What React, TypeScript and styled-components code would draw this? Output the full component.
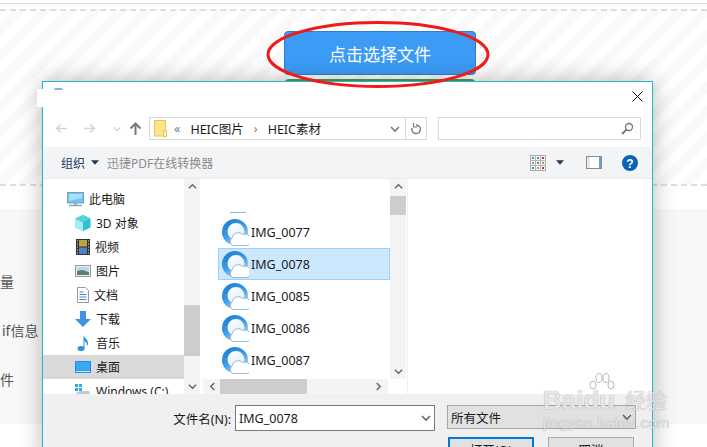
import React from 'react';
import styled, { createGlobalStyle } from 'styled-components';

const GlobalStyle = createGlobalStyle`
  html, body {
    margin: 0;
    padding: 0;
    background: #fff;
  }
`;

const uiFont = `"Noto Sans", "Noto Sans CJK SC", sans-serif`;

const Page = styled.div`
  position: relative;
  width: 707px;
  height: 447px;
  overflow: hidden;
  background: #fff;
  font-family: ${uiFont};
`;

const TopRule = styled.div`
  height: 3px;
  border-bottom: 1px solid #dcdcdc;
  margin-bottom: 5px;
`;

const UploadZone = styled.div`
  height: 177px;
  box-sizing: border-box;
  border-top: 2px dashed #dedede;
  border-bottom: 2px dashed #dedede;
  padding: 20px 0 0 53px;
  display: flex;
  flex-direction: column;
  align-items: center;
  gap: 4px;
  background: repeating-linear-gradient(135deg, #fff 0 9px, #f9f9f9 9px 18px);
`;

const PickButton = styled.div`
  width: 192px;
  height: 44px;
  box-sizing: border-box;
  border: 1px solid #2f7fd0;
  border-radius: 4px;
  background: #3b9bf5;
  color: #fff;
  font-size: 17px;
  display: flex;
  align-items: center;
  justify-content: center;
  flex: none;
`;

const GreenButton = styled.div`
  width: 190px;
  height: 44px;
  border-radius: 4px;
  background: #4a9e57;
  flex: none;
`;

const InfoPanel = styled.div`
  margin-top: 23px;
  height: 215px;
  background: #f8f8f8;
  display: flex;
  flex-direction: column;
  padding-top: 63px;
  box-sizing: border-box;
  gap: 30px;
`;

const InfoLine = styled.div<{ $nudge?: number }>`
  font-size: 14px;
  line-height: 19px;
  color: #555;
  padding-left: ${(p) => p.$nudge ?? 0}px;
`;

const Dialog = styled.div`
  position: absolute;
  left: 42px;
  top: 81px;
  width: 611px;
  height: 380px;
  box-sizing: border-box;
  border: 1px solid #1fb9c9;
  background: #fff;
  box-shadow: 0 0 22px rgba(0, 0, 0, 0.28);
  display: flex;
  flex-direction: column;
`;

const TitleBar = styled.div`
  height: 29px;
  padding: 0 9px 6px 0;
  display: flex;
  align-items: center;
  justify-content: flex-end;
  flex: none;
`;

const NavRow = styled.div`
  height: 23px;
  display: flex;
  align-items: center;
  padding: 0 11px 0 12px;
  flex: none;
`;

const NavArrow = styled.div<{ $w: number }>`
  width: ${(p) => p.$w}px;
  display: flex;
  align-items: center;
  justify-content: center;
  flex: none;
`;

const AddressBox = styled.div`
  width: 272px;
  height: 21px;
  border: 1px solid #d9d9d9;
  display: flex;
  align-items: center;
  font-size: 12.5px;
  color: #1a1a1a;
  flex: none;
  padding-left: 4px;
`;

const Crumb = styled.span<{ $gap: number; $sep?: boolean }>`
  margin-left: ${(p) => p.$gap}px;
  color: ${(p) => (p.$sep ? '#777' : 'inherit')};
`;

const AddressEnd = styled.div`
  margin-left: auto;
  height: 21px;
  display: flex;
  align-items: center;
`;

const RefreshCell = styled.div`
  width: 20px;
  height: 21px;
  border-left: 1px solid #d9d9d9;
  display: flex;
  align-items: center;
  justify-content: center;
  margin-left: 5px;
`;

const SearchBox = styled.div`
  width: 203px;
  height: 23px;
  box-sizing: border-box;
  margin-left: auto;
  border: 1px solid #d9d9d9;
  display: flex;
  align-items: center;
  justify-content: flex-end;
  padding-right: 6px;
`;

const Toolbar = styled.div`
  height: 31px;
  margin-top: 7px;
  background: #f3f4f6;
  border-bottom: 1px solid #e8e9ec;
  display: flex;
  align-items: center;
  padding: 0 14px 0 18px;
  font-size: 12px;
  flex: none;
`;

const ToolLabel = styled.span<{ $muted?: boolean }>`
  color: ${(p) => (p.$muted ? '#8b8b8b' : '#1f3a5c')};
  margin-left: ${(p) => (p.$muted ? 8 : 0)}px;
`;

const ToolRight = styled.div`
  margin-left: auto;
  display: flex;
  align-items: center;
  gap: 20px;
`;

const Panes = styled.div`
  height: 215px;
  display: flex;
  flex: none;
`;

const TreePane = styled.div`
  width: 141px;
  overflow: hidden;
  padding-top: 8px;
  box-sizing: border-box;
  flex: none;
`;

const TreeRow = styled.div<{ $active?: boolean; $indent: number }>`
  height: 24px;
  display: flex;
  align-items: center;
  gap: 5px;
  padding-left: ${(p) => p.$indent}px;
  background: ${(p) => (p.$active ? '#d9d9d9' : 'transparent')};
  font-size: 12px;
  color: #1a1a1a;
  white-space: nowrap;
`;

const VScroll = styled.div<{ $thumbTop: number; $thumbH: number }>`
  width: 16px;
  background: #f4f4f4;
  display: flex;
  flex-direction: column;
  align-items: center;
  flex: none;
  position: relative;
  justify-content: space-between;
  padding: 3px 0;
  box-sizing: border-box;

  &::after {
    content: '';
    position: absolute;
    left: 0;
    right: 0;
    top: ${(p) => p.$thumbTop}px;
    height: ${(p) => p.$thumbH}px;
    background: #cdcdcd;
  }
`;

const FileColumn = styled.div`
  width: 204px;
  margin-left: 2px;
  flex: none;
  display: flex;
  flex-direction: column;
`;

const FileArea = styled.div`
  height: 200px;
  display: flex;
  flex: none;
`;

const FileList = styled.div`
  width: 188px;
  padding-top: 37px;
  box-sizing: border-box;
  overflow: hidden;
  flex: none;
  position: relative;
`;

const CutOffIcon = styled.div`
  position: absolute;
  left: 28px;
  top: 33px;
  width: 16px;
  height: 1px;
  background: #8fb6dc;
`;

const FileRow = styled.div<{ $selected?: boolean }>`
  height: 32px;
  margin-left: 16px;
  box-sizing: border-box;
  display: flex;
  align-items: center;
  gap: 2px;
  padding-left: 3px;
  font-size: 12.5px;
  color: #1a1a1a;
  border: 1px solid ${(p) => (p.$selected ? '#99d1ff' : 'transparent')};
  background: ${(p) => (p.$selected ? '#cce8ff' : 'transparent')};
`;

const HScroll = styled.div`
  width: 185px;
  height: 15px;
  margin-left: 1px;
  background: #f4f4f4;
  display: flex;
  align-items: center;
  justify-content: space-between;
  padding: 0 5px;
  box-sizing: border-box;
  position: relative;

  &::after {
    content: '';
    position: absolute;
    left: 17px;
    top: 0;
    bottom: 0;
    width: 87px;
    background: #cdcdcd;
  }
`;

const PreviewPane = styled.div`
  flex: 1;
  border-left: 1px solid #f0f0f0;
  margin-left: 1px;
`;

const BottomPanel = styled.div`
  flex: 1;
  background: #f0f0f0;
  padding: 11px 0 0 0;
  display: grid;
  grid-template-columns: 192px 200px 199px;
  grid-auto-rows: min-content;
  font-size: 12.5px;
  color: #1a1a1a;
`;

const NameLabel = styled.div`
  height: 26px;
  display: flex;
  align-items: center;
  justify-content: flex-end;
  padding-right: 4px;
`;

const NameInput = styled.div`
  height: 24px;
  border: 1px solid #7a7a7a;
  background: #fff;
  display: flex;
  align-items: center;
  justify-content: space-between;
  padding: 0 3px;
`;

const FilterSelect = styled.div`
  height: 22px;
  width: 181px;
  margin-left: 12px;
  border: 1px solid #a6a6a6;
  background: #e1e1e1;
  display: flex;
  align-items: center;
  justify-content: space-between;
  padding: 0 3px;
`;

const ActionRow = styled.div`
  grid-column: 3;
  margin-left: 13px;
  width: 186px;
  display: flex;
  justify-content: space-between;
  margin-top: 6px;
`;

const DialogButton = styled.div<{ $primary?: boolean }>`
  width: 86px;
  height: 24px;
  box-sizing: border-box;
  border: ${(p) => (p.$primary ? '2px solid #0078d7' : '1px solid #adadad')};
  background: #e1e1e1;
  display: flex;
  align-items: center;
  justify-content: center;
`;

const RedRing = styled.svg`
  position: absolute;
  left: 262px;
  top: 16px;
  pointer-events: none;
`;

const MaskPatch = styled.div`
  position: absolute;
  left: 37px;
  top: 89px;
  width: 20px;
  height: 18px;
  background: #fff;
`;

const TitleGlint = styled.div`
  position: absolute;
  left: 54px;
  top: 88px;
  width: 9px;
  height: 2px;
  border-radius: 4px 4px 0 0;
  background: #7fb2dd;
`;

const Watermark = styled.div`
  position: absolute;
  left: 543px;
  top: 387px;
  color: rgba(255, 255, 255, 0.78);
  text-shadow: 0 0 1px rgba(110, 110, 110, 0.8);
  font-family: "Liberation Sans", "Noto Sans CJK SC", sans-serif;
  line-height: 1;
`;

const MarkTop = styled.div`
  font-size: 26px;
  font-weight: 700;
  display: flex;
  align-items: center;
  white-space: nowrap;
`;

const MarkCjk = styled.span`
  font-size: 21px;
  margin-left: 10px;
  font-weight: 400;
`;

const MarkSub = styled.div`
  font-size: 15px;
  margin-top: 2px;
  letter-spacing: 0.35px;
  white-space: nowrap;
`;

const MarkPaw = styled.svg`
  position: absolute;
  left: 46px;
  top: -15px;
`;

const Chevron = ({ dir, size = 9, color = '#666' }: { dir: 'up' | 'down' | 'left' | 'right'; size?: number; color?: string }) => {
  const d = {
    up: 'M1 7 L5 3 L9 7',
    down: 'M1 3 L5 7 L9 3',
    left: 'M7 1 L3 5 L7 9',
    right: 'M3 1 L7 5 L3 9',
  }[dir];
  return (
    <svg width={size} height={size} viewBox="0 0 10 10" style={{ position: 'relative', zIndex: 1 }}>
      <path d={d} fill="none" stroke={color} strokeWidth="1.6" />
    </svg>
  );
};

const LeftRight = ({ flip, color }: { flip?: boolean; color: string }) => (
  <svg width="13" height="11" viewBox="0 0 13 11">
    <path d={flip ? 'M1 5.5 H11 M7 1.5 L11.5 5.5 L7 9.5' : 'M12 5.5 H2 M6 1.5 L1.5 5.5 L6 9.5'} fill="none" stroke={color} strokeWidth="1.6" />
  </svg>
);

const HeicIcon = () => (
  <svg width="27" height="27" viewBox="0 0 27 27" style={{ flex: 'none' }}>
    <defs>
      <linearGradient id="heicRing" x1="0.1" y1="0" x2="0.7" y2="1">
        <stop offset="0" stopColor="#1479d6" />
        <stop offset="0.55" stopColor="#3f9ce6" />
        <stop offset="1" stopColor="#cfe6f8" />
      </linearGradient>
      <linearGradient id="heicCore" x1="0" y1="0" x2="0.4" y2="1">
        <stop offset="0" stopColor="#fff" />
        <stop offset="1" stopColor="#dff0fc" />
      </linearGradient>
    </defs>
    <circle cx="13" cy="13" r="13" fill="url(#heicRing)" />
    <circle cx="14" cy="12.500" r="8.500" fill="url(#heicCore)" />
    <path d="M10.500 26.500 a4.500 4.500 0 0 1 -.5-7.500 a6.500 6.500 0 0 1 11-3.500 a5.500 5.500 0 0 1 4.500 11 z" fill="#fff" stroke="#7aa9d4" strokeWidth="0.8" />
  </svg>
);

const PcIcon = () => (
  <svg width="17" height="15" viewBox="0 0 17 15" style={{ flex: 'none' }}>
    <rect x="0.5" y="0.5" width="16" height="10.5" fill="#6cc5f5" stroke="#7f9fb5" />
    <path d="M2 2h13v4L2 9z" fill="#a8e0fa" />
    <path d="M7 11h3v2H7z" fill="#9fb2c0" />
    <path d="M2 13.5h13" stroke="#8ea2b0" strokeWidth="1.4" />
  </svg>
);

const CubeIcon = () => (
  <svg width="16" height="16" viewBox="0 0 16 16" style={{ flex: 'none' }}>
    <path d="M8 0l7.5 3.5v9L8 16 .5 12.500v-9z" fill="#30bfd0" />
    <path d="M8 7.500L.5 3.500v9L8 16z" fill="#a9ecef" />
    <path d="M8 0l7.500 3.500L8 7.500 .5 3.500z" fill="#57d2df" />
  </svg>
);

const FilmIcon = () => (
  <svg width="14" height="16" viewBox="0 0 14 16" style={{ flex: 'none' }}>
    <rect width="14" height="16" fill="#333" />
    <rect x="3" y="1" width="8" height="6.500" fill="#b9a53a" />
    <rect x="3" y="8.500" width="8" height="6.500" fill="#4f7fc4" />
    <path d="M1 2h1M1 5h1M1 8h1M1 11h1M1 14h1M12 2h1M12 5h1M12 8h1M12 11h1M12 14h1" stroke="#ddd" />
  </svg>
);

const PictureIcon = () => (
  <svg width="16" height="12" viewBox="0 0 16 12" style={{ flex: 'none' }}>
    <rect x="0.5" y="0.5" width="15" height="11" fill="#e8eef2" stroke="#9b9b9b" />
    <path d="M2 2h12v4H2z" fill="#bcd9ec" />
    <path d="M2 6l5-1 7 2v3H2z" fill="#5b7d78" />
  </svg>
);

const DocIcon = () => (
  <svg width="12" height="16" viewBox="0 0 12 16" style={{ flex: 'none' }}>
    <path d="M.5.500h8l3 3v12H.5z" fill="#fff" stroke="#9a9a9a" />
    <path d="M2.500 5h4M2.500 7.500h7M2.500 10h7M2.500 12.500h7" stroke="#4f86c6" />
  </svg>
);

const DownIcon = () => (
  <svg width="16" height="16" viewBox="0 0 16 16" style={{ flex: 'none' }}>
    <path d="M5 0h6v8h5l-8 8-8-8h5z" fill="#3d94e0" />
  </svg>
);

const MusicIcon = () => (
  <svg width="16" height="16" viewBox="0 0 16 16" style={{ flex: 'none' }}>
    <ellipse cx="6" cy="13.500" rx="3.500" ry="2.500" fill="#2b90e8" />
    <path d="M8.500 13V0c.5 3 4.500 4 4.500 8 0 1.500-.5 2.500-1 3 .2-3-1.500-4.500-2.500-5v7z" fill="#2b90e8" />
  </svg>
);

const DesktopIcon = () => (
  <svg width="16" height="12" viewBox="0 0 16 12" style={{ flex: 'none' }}>
    <rect width="16" height="12" fill="#1f8fe8" />
    <rect x="1" y="1" width="14" height="8.500" fill="#3aa7f2" />
    <path d="M1 10.500h14" stroke="#d5ecfb" />
  </svg>
);

const DriveIcon = () => (
  <svg width="16" height="14" viewBox="0 0 16 14" style={{ flex: 'none' }}>
    <path d="M0 0h3v3H0zM4 0h3v3H4zM0 4h3v3H0zM4 4h3v3H4z" fill="#2ea6ee" />
    <path d="M6 7h8l2 5H0l2-4z" fill="#c4c9cc" />
  </svg>
);

const treeItems = [
  { label: '此电脑', icon: <PcIcon />, indent: 24 },
  { label: '3D 对象', icon: <CubeIcon />, indent: 32 },
  { label: '视频', icon: <FilmIcon />, indent: 33 },
  { label: '图片', icon: <PictureIcon />, indent: 32 },
  { label: '文档', icon: <DocIcon />, indent: 34 },
  { label: '下载', icon: <DownIcon />, indent: 32 },
  { label: '音乐', icon: <MusicIcon />, indent: 32 },
  { label: '桌面', icon: <DesktopIcon />, indent: 32, active: true },
  { label: 'Windows (C:)', icon: <DriveIcon />, indent: 32 },
];

const files = ['IMG_0077', 'IMG_0078', 'IMG_0085', 'IMG_0086', 'IMG_0087'];

const App: React.FC = () => {
  return (
    <Page>
      <GlobalStyle />
      <TopRule />
      <UploadZone>
        <PickButton>点击选择文件</PickButton>
        <GreenButton />
      </UploadZone>
      <InfoPanel>
        <InfoLine>量</InfoLine>
        <InfoLine $nudge={2}>if信息</InfoLine>
        <InfoLine>件</InfoLine>
      </InfoPanel>

      <Dialog>
        <TitleBar>
          <svg width="11" height="11" viewBox="0 0 11 11">
            <path d="M.5.500l10 10M10.500.500l-10 10" stroke="#111" strokeWidth="1" />
          </svg>
        </TitleBar>
        <NavRow>
          <NavArrow $w={13}><LeftRight color="#d4d4d4" /></NavArrow>
          <NavArrow $w={43}><LeftRight flip color="#d4d4d4" /></NavArrow>
          <NavArrow $w={11}><Chevron dir="down" size={8} color="#d0d0d0" /></NavArrow>
          <NavArrow $w={27}>
            <svg width="13" height="13" viewBox="0 0 13 13">
              <path d="M6.500 13V2M1.500 6.500l5-5 5 5" fill="none" stroke="#777" strokeWidth="2" />
            </svg>
          </NavArrow>
          <AddressBox>
            <svg width="13" height="17" viewBox="0 0 13 17" style={{ flex: 'none' }}>
              <rect x="0.500" y="0.500" width="11" height="15.500" fill="#fde48f" stroke="#e8c353" />
              <rect x="9.500" y="11" width="3" height="5.500" fill="#fff4c4" stroke="#e8c353" />
            </svg>
            <Crumb $gap={7} $sep>«</Crumb>
            <Crumb $gap={10}>HEIC图片</Crumb>
            <Crumb $gap={10} $sep>›</Crumb>
            <Crumb $gap={10}>HEIC素材</Crumb>
            <AddressEnd>
              <Chevron dir="down" size={10} color="#777" />
              <RefreshCell>
                <svg width="12" height="12" viewBox="0 0 12 12">
                  <path d="M6 2a4.300 4.300 0 1 1-4 3" fill="none" stroke="#777" strokeWidth="1.400" />
                  <path d="M3.500 0v4h4" fill="none" stroke="#777" strokeWidth="1.200" />
                </svg>
              </RefreshCell>
            </AddressEnd>
          </AddressBox>
          <SearchBox>
            <svg width="13" height="13" viewBox="0 0 13 13">
              <circle cx="8" cy="5" r="3.500" fill="none" stroke="#777" strokeWidth="1.300" />
              <path d="M5.500 7.500L1 12" stroke="#777" strokeWidth="1.800" />
            </svg>
          </SearchBox>
        </NavRow>
        <Toolbar>
          <ToolLabel>组织</ToolLabel>
          <svg width="8" height="5" viewBox="0 0 9 5" style={{ marginLeft: 6 }}>
            <path d="M0 0h9L4.500 5z" fill="#1f3a5c" />
          </svg>
          <ToolLabel $muted>迅捷PDF在线转换器</ToolLabel>
          <ToolRight>
            <svg width="16" height="16" viewBox="0 0 16 16">
              <rect x="0.500" y="0.500" width="15" height="15" fill="#f7f7f7" stroke="#a9a9a9" />
              <path d="M5.500 0v16M10.500 0v16M0 5.500h16M0 10.500h16" stroke="#b5b5b5" />
              <path d="M2 2h2v2H2zM7 2h2v2H7zM2 12h2v2H2zM7 7h2v2H7z" fill="#5b87b5" />
              <path d="M12 2h2v2h-2zM12 12h2v2h-2z" fill="#b23a3a" />
              <path d="M2 7h2v2H2zM12 7h2v2h-2zM7 12h2v2H7z" fill="#9aa75a" />
            </svg>
            <svg width="8" height="5" viewBox="0 0 9 5" style={{ marginLeft: -10 }}>
              <path d="M0 0h9L4.500 5z" fill="#1f3a5c" />
            </svg>
            <svg width="16" height="13" viewBox="0 0 16 13" style={{ marginLeft: 2 }}>
              <rect x="0.500" y="0.500" width="15" height="12" fill="#fff" stroke="#8d8d8d" />
              <rect x="1" y="1" width="3" height="11" fill="#e8e8e8" />
              <rect x="13" y="1" width="2" height="11" fill="#5ea3dc" />
            </svg>
            <svg width="16" height="16" viewBox="0 0 16 16">
              <circle cx="8" cy="8" r="8" fill="#0a63b5" />
              <text x="8" y="12.500" textAnchor="middle" fontSize="12" fontWeight="700" fill="#fff" fontFamily="Liberation Sans">?</text>
            </svg>
          </ToolRight>
        </Toolbar>
        <Panes>
          <TreePane>
            {treeItems.map((item) => (
              <TreeRow key={item.label} $active={item.active} $indent={item.indent}>
                {item.icon}
                {item.label}
              </TreeRow>
            ))}
          </TreePane>
          <VScroll $thumbTop={126} $thumbH={51}>
            <Chevron dir="up" />
            <Chevron dir="down" />
          </VScroll>
          <FileColumn>
            <FileArea>
              <FileList>
                <CutOffIcon />
                {files.map((name) => (
                  <FileRow key={name} $selected={name === 'IMG_0078'}>
                    <HeicIcon />
                    {name}
                  </FileRow>
                ))}
              </FileList>
              <VScroll $thumbTop={17} $thumbH={19}>
                <Chevron dir="up" />
                <Chevron dir="down" />
              </VScroll>
            </FileArea>
            <HScroll>
              <Chevron dir="left" />
              <Chevron dir="right" />
            </HScroll>
          </FileColumn>
          <PreviewPane />
        </Panes>
        <BottomPanel>
          <NameLabel>文件名(N):</NameLabel>
          <NameInput>
            IMG_0078
            <Chevron dir="down" size={10} />
          </NameInput>
          <FilterSelect>
            所有文件
            <Chevron dir="down" size={10} />
          </FilterSelect>
          <ActionRow>
            <DialogButton $primary>打开(O)</DialogButton>
            <DialogButton>取消</DialogButton>
          </ActionRow>
        </BottomPanel>
      </Dialog>

      <MaskPatch />
      <TitleGlint />

      <RedRing width="232" height="78" viewBox="0 0 232 78">
        <ellipse cx="116" cy="38.500" rx="110" ry="32" fill="none" stroke="#f2191a" strokeWidth="3" />
      </RedRing>

      <Watermark>
        <MarkPaw width="26" height="24" viewBox="0 0 26 24">
          <g fill="rgba(255,255,255,0.8)" stroke="rgba(170,170,170,0.8)" strokeWidth="1">
            <ellipse cx="4" cy="13" rx="3" ry="4" />
            <ellipse cx="10" cy="6" rx="3" ry="4.500" />
            <ellipse cx="17" cy="6" rx="3" ry="4.500" />
            <ellipse cx="22" cy="13" rx="3" ry="4" />
          </g>
        </MarkPaw>
        <MarkTop>
          Baidu
          <MarkCjk>经验</MarkCjk>
        </MarkTop>
        <MarkSub>jingyan.baidu.com</MarkSub>
      </Watermark>
    </Page>
  );
};

export default App;
